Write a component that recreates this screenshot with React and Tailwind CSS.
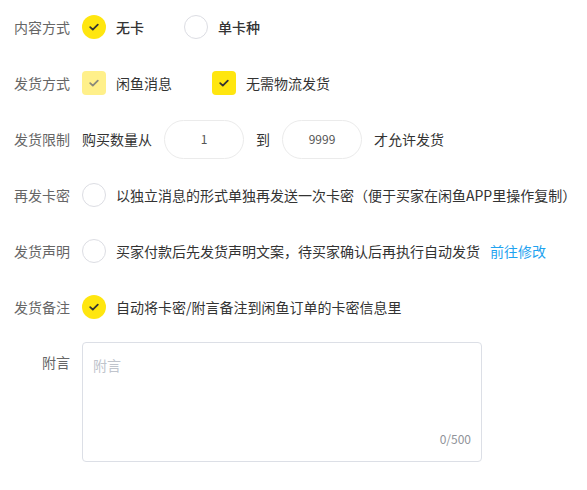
import React from 'react';

const Check = ({ color = '#333' }) => (
  <svg width="12" height="12" viewBox="0 0 12 12" fill="none">
    <path d="M2.2 6.2 L4.8 8.6 L9.8 3.6" stroke={color} strokeWidth="1.8" strokeLinecap="round" strokeLinejoin="round" />
  </svg>
);

const Radio = ({ on }) =>
  on ? (
    <span className="w-6 h-6 rounded-full bg-[#ffe60f] flex items-center justify-center shrink-0">
      <Check />
    </span>
  ) : (
    <span className="block w-6 h-6 rounded-full border border-[#dcdde3] bg-white shrink-0" />
  );

const Box = ({ disabled }) => (
  <span
    className={
      'w-6 h-6 rounded-[4px] flex items-center justify-center shrink-0 ' +
      (disabled ? 'bg-[#fff08a]' : 'bg-[#ffe60f]')
    }
  >
    <Check color={disabled ? '#8a8a7a' : '#333'} />
  </span>
);

const Row = ({ label, children }) => (
  <div className="h-14 flex items-center">
    <div className="w-[70px] pl-[14px] shrink-0 text-[#666]">{label}</div>
    <div className="ml-3 flex items-center text-[#333]">{children}</div>
  </div>
);

export default function App() {
  return (
    <div
      className="w-[587px] h-[490px] bg-white text-[14px] leading-5 -mt-px"
      style={{ fontFamily: '"Noto Sans CJK SC", "Noto Sans", sans-serif' }}
    >
      <Row label="内容方式">
        <Radio on />
        <span className="ml-[10px] font-medium">无卡</span>
        <span className="ml-[40px]"><Radio /></span>
        <span className="ml-[10px] font-medium">单卡种</span>
      </Row>
      <Row label="发货方式">
        <Box disabled />
        <span className="ml-[10px]">闲鱼消息</span>
        <span className="ml-[40px]"><Box /></span>
        <span className="ml-[10px]">无需物流发货</span>
      </Row>
      <Row label="发货限制">
        <span>购买数量从</span>
        <span className="ml-3 w-20 h-[39px] rounded-full border border-[#ebebeb] flex items-center justify-center text-[12px] text-[#555]">1</span>
        <span className="ml-3">到</span>
        <span className="ml-3 w-20 h-[39px] rounded-full border border-[#ebebeb] flex items-center justify-center text-[12px] text-[#555]">9999</span>
        <span className="ml-3">才允许发货</span>
      </Row>
      <Row label="再发卡密">
        <Radio />
        <span className="ml-[10px] whitespace-nowrap">以独立消息的形式单独再发送一次卡密（便于买家在闲鱼APP里操作复制）</span>
      </Row>
      <Row label="发货声明">
        <Radio />
        <span className="ml-[10px] whitespace-nowrap">买家付款后先发货声明文案，待买家确认后再执行自动发货</span>
        <span className="ml-[10px] text-[#1fa3f0]">前往修改</span>
      </Row>
      <Row label="发货备注">
        <Radio on />
        <span className="ml-[10px]">自动将卡密/附言备注到闲鱼订单的卡密信息里</span>
      </Row>
      <div className="flex mt-[7px]">
        <div className="w-[70px] shrink-0 text-right text-[#666] pt-[10px]">附言</div>
        <div className="ml-3 w-[400px] h-[120px] border border-[#dcdfe6] rounded-[4px] flex flex-col justify-between px-[10px] pt-[12px] pb-[12px]">
          <span className="text-[#c0c4cc]">附言</span>
          <span className="self-end text-[12px] text-[#909399]">0/500</span>
        </div>
      </div>
    </div>
  );
}
